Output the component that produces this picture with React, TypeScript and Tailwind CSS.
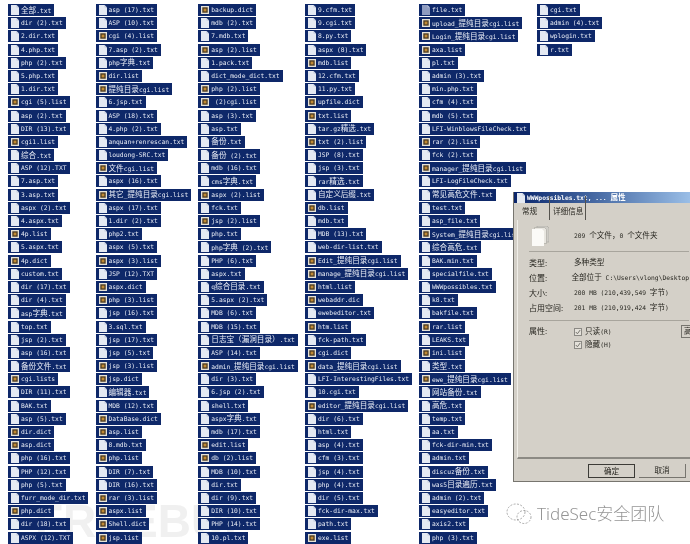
const columns: { width: string; files: string[] }[] = [
  {
    width: "w-[87.5px]",
    files: [
      "全部.txt", "dir (2).txt", "2.dir.txt", "4.php.txt", "php (2).txt", "5.php.txt", "1.dir.txt", "cgi (5).list",
      "asp (2).txt", "DIR (13).txt", "cgi1.list", "综合.txt", "ASP (12).TXT", "7.asp.txt", "3.asp.txt", "aspx (2).txt",
      "4.aspx.txt", "4p.list", "5.aspx.txt", "4p.dict", "custom.txt", "dir (17).txt", "dir (4).txt", "asp字典.txt",
      "top.txt", "jsp (2).txt", "asp (16).txt", "备份文件.txt", "cgi.lists", "DIR (11).txt", "BAK.txt", "asp (5).txt",
      "dir.dict", "asp.dict", "php (16).txt", "PHP (12).txt", "php (5).txt", "furr_mode_dir.txt", "php.dict",
      "dir (18).txt", "ASPX (12).TXT",
    ],
  },
  {
    width: "w-[102.8px]",
    files: [
      "asp (17).txt", "ASP (10).txt", "cgi (4).list", "7.asp (2).txt", "php字典.txt", "dir.list", "提纯目录cgi.list",
      "6.jsp.txt", "ASP (18).txt", "4.php (2).txt", "anquan+renrescan.txt", "loudong-SRC.txt", "文件cgi.list",
      "aspx (16).txt", "其它_提纯目录cgi.list", "aspx (17).txt", "1.dir (2).txt", "php2.txt", "aspx (5).txt",
      "aspx (3).list", "JSP (12).TXT", "aspx.dict", "php (3).list", "jsp (16).txt", "3.sql.txt", "jsp (17).txt",
      "jsp (5).txt", "jsp (3).list", "jsp.dict", "编辑器.txt", "MDB (12).txt", "DataBase.dict", "asp.list", "8.mdb.txt",
      "php.list", "DIR (7).txt", "DIR (16).txt", "rar (3).list", "aspx.list", "Shell.dict", "jsp.list",
    ],
  },
  {
    width: "w-[106.7px]",
    files: [
      "backup.dict", "mdb (2).txt", "7.mdb.txt", "asp (2).list", "1.pack.txt", "dict_mode_dict.txt", "php (2).list",
      " (2)cgi.list", "asp (3).txt", "asp.txt", "备份.txt", "备份 (2).txt", "mdb (16).txt", "cms字典.txt", "aspx (2).list",
      "fck.txt", "jsp (2).list", "php.txt", "php字典 (2).txt", "PHP (6).txt", "aspx.txt", "q综合目录.txt", "5.aspx (2).txt",
      "MDB (6).txt", "MDB (15).txt", "日志宝（漏洞目录）.txt", "ASP (14).txt", "admin_提纯目录cgi.list", "dir (3).txt",
      "6.jsp (2).txt", "shell.txt", "aspx字典.txt", "mdb (17).txt", "edit.list", "db (2).list", "MDB (10).txt", "dir.txt",
      "dir (9).txt", "DIR (10).txt", "PHP (14).txt", "10.pl.txt",
    ],
  },
  {
    width: "w-[114px]",
    files: [
      "9.cfm.txt", "9.cgi.txt", "8.py.txt", "aspx (8).txt", "mdb.list", "12.cfm.txt", "11.py.txt", "upfile.dict",
      "txt.list", "tar.gz精选.txt", "txt (2).list", "JSP (8).txt", "jsp (3).txt", "rar精选.txt", "自定义后缀.txt", "db.list",
      "mdb.txt", "MDB (13).txt", "web-dir-list.txt", "Edit_提纯目录cgi.list", "manage_提纯目录cgi.list", "html.list",
      "webaddr.dic", "ewebeditor.txt", "htm.list", "fck-path.txt", "cgi.dict", "data_提纯目录cgi.list",
      "LFI-InterestingFiles.txt", "10.cgi.txt", "editor_提纯目录cgi.list", "dir (6).txt", "html.txt", "asp (4).txt",
      "cfm (3).txt", "jsp (4).txt", "php (4).txt", "dir (5).txt", "fck-dir-max.txt", "path.txt", "exe.list",
    ],
  },
  {
    width: "w-[118px]",
    files: [
      "file.txt", "upload_提纯目录cgi.list", "Login_提纯目录cgi.list", "axa.list", "pl.txt", "admin (3).txt", "min.php.txt",
      "cfm (4).txt", "mdb (5).txt", "LFI-WinblowsFileCheck.txt", "rar (2).list", "fck (2).txt", "manager_提纯目录cgi.list",
      "LFI-LogFileCheck.txt", "常见高危文件.txt", "test.txt", "asp_file.txt", "System_提纯目录cgi.list", "综合高危.txt",
      "BAK.min.txt", "specialfile.txt", "WWWpossibles.txt", "k8.txt", "bakfile.txt", "rar.list", "LEAKS.txt", "ini.list",
      "类型.txt", "ewe_提纯目录cgi.list", "网站备份.txt", "高危.txt", "temp.txt", "aa.txt", "fck-dir-min.txt", "admin.txt",
      "discuz备份.txt", "was5目录遍历.txt", "admin (2).txt", "easyeditor.txt", "axis2.txt", "php (3).txt",
    ],
  },
  {
    width: "w-[100px]",
    files: ["cgi.txt", "admin (4).txt", "wplogin.txt", "r.txt"],
  },
];

// latin is half the width of the CJK glyphs, like the old bitmap font
function MixedText({ text }: { text: string }) {
  const parts = text.split(/([^\x00-\x7f]+)/).filter(Boolean);
  return (
    <span className="whitespace-pre font-['DejaVu_Sans_Mono',monospace] text-[6.3px] leading-[12px]">
      {parts.map((part, i) =>
        /[^\x00-\x7f]/.test(part) ? (
          <span key={i} className="font-['Noto_Sans_CJK_SC',sans-serif] text-[7.6px]">
            {part}
          </span>
        ) : (
          <span key={i}>{part}</span>
        )
      )}
    </span>
  );
}

function FileIcon({ dim }: { dim?: boolean }) {
  return (
    <svg width="8" height="10" viewBox="0 0 8 10" className="shrink-0">
      <path d="M0 0h5.5L8 2.5V10H0z" fill={dim ? "#8f9cc0" : "#e4e9f2"} />
      <path d="M5.5 0L8 2.5H5.5z" fill={dim ? "#b5bfd8" : "#c3cbdc"} />
    </svg>
  );
}

function ListIcon() {
  return (
    <svg width="8" height="8" viewBox="0 0 8 8" className="shrink-0">
      <rect width="8" height="8" fill="#e6e2d6" />
      <rect x="1.3" y="1.3" width="5.4" height="5.4" fill="#4a3a20" />
      <rect x="2.6" y="2.6" width="2.8" height="2.8" fill="#c08a35" />
    </svg>
  );
}

function FileRow({ name }: { name: string }) {
  const isList = /\.(list|lists|dict|dic)$/.test(name);
  return (
    <div className="flex h-[12px] w-fit items-center gap-[2px] bg-[#0e2869] pl-[3px] pr-[3px] text-[#e9edf6]">
      {isList ? <ListIcon /> : <FileIcon dim={name === "file.txt"} />}
      <MixedText text={name} />
    </div>
  );
}

function PropRow({ label, value }: { label: string; value: string }) {
  return (
    <div className="flex h-[15px] items-center">
      <div className="w-[45px] font-['Noto_Sans_CJK_SC',sans-serif] text-[8px]">{label}</div>
      <MixedText text={value} />
    </div>
  );
}

function Checked({ label }: { label: string }) {
  return (
    <div className="flex h-[13px] items-center gap-[3px]">
      <svg width="8" height="8" viewBox="0 0 8 8" className="shrink-0">
        <rect x="0.5" y="0.5" width="7" height="7" fill="#e4e1da" stroke="#8b8984" />
        <path d="M1.8 4l1.6 1.8L6.2 2" fill="none" stroke="#77756f" strokeWidth="1" />
      </svg>
      <MixedText text={label} />
    </div>
  );
}

function PropertiesWindow() {
  return (
    <div className="absolute left-[513px] top-[192px] z-20 h-[290px] w-[190px] border-b border-l border-[#77756f] bg-[#d4d0c8] text-[#26251f]">
      <div className="flex h-[11px] items-center gap-[2px] bg-gradient-to-r from-[#0a246a] to-[#a6caf0] pl-[3px] font-bold text-white">
        <FileIcon />
        <MixedText text="WWWpossibles.txt, ... 属性" />
      </div>
      <div className="mx-[3px] mt-[5px] flex h-[12px] items-end pl-[3px]">
        <div className="w-[30px] border-r border-[#55534e] pl-[2px]">
          <MixedText text="常规" />
        </div>
        <div className="border-r border-[#55534e] pl-[3px] pr-[2px]">
          <MixedText text="详细信息" />
        </div>
      </div>
      <div className="mx-[3px] h-[239px] border-b-2 border-l border-b-[#8c8a84] border-l-[#f0eee8] px-[11px]">
        <div className="flex h-[32px] items-center border-b border-[#a8a59d]">
          <div className="flex w-[45px] pl-[3px]">
            <svg width="17" height="20" viewBox="0 0 17 20">
              <path d="M5 0h10l2 2v14H5z" fill="#cfcdc7" stroke="#9b9993" strokeWidth="0.5" />
              <path d="M2.5 1.5h10l2 2v14h-12z" fill="#e8e6e0" stroke="#9b9993" strokeWidth="0.5" />
              <path d="M0 3h10l2 2v15H0z" fill="#fbfaf7" />
            </svg>
          </div>
          <MixedText text="209 个文件，0 个文件夹" />
        </div>
        <div className="flex flex-col border-b border-[#a8a59d] pb-[5px] pt-[3px]">
          <PropRow label="类型:" value="多种类型" />
          <PropRow label="位置:" value="全部位于 C:\Users\vlong\Desktop" />
          <PropRow label="大小:" value="200 MB (210,439,549 字节)" />
          <PropRow label="占用空间:" value="201 MB (210,919,424 字节)" />
        </div>
        <div className="flex pt-[4px]">
          <div className="w-[45px] shrink-0 font-['Noto_Sans_CJK_SC',sans-serif] text-[8px]">属性:</div>
          <div className="flex w-[107px] shrink-0 flex-col">
            <Checked label="只读(R)" />
            <Checked label="隐藏(H)" />
          </div>
          <div className="flex h-[13px] w-[30px] shrink-0 items-center border border-[#77756f] bg-[#d4d0c8] pl-[2px]">
            <MixedText text="高级" />
          </div>
        </div>
      </div>
      <div className="mt-[5px] flex gap-[4px] pl-[74px]">
        <div className="flex h-[14px] w-[47px] items-center justify-center border border-[#3c3b37]">
          <MixedText text="确定" />
        </div>
        <div className="flex h-[14px] w-[47px] items-center justify-center border-b border-r border-[#77756f]">
          <MixedText text="取消" />
        </div>
      </div>
    </div>
  );
}

export default function App() {
  return (
    <div className="relative h-[544px] w-[690px] overflow-hidden bg-white blur-[0.3px]">
      {/* faint site watermark behind the listing */}
      <div className="absolute left-[35px] top-[493px] font-['Liberation_Sans',sans-serif] text-[46px] font-bold leading-[56px] text-[#f0f0f0]">
        FREEBUF
      </div>

      <div className="relative z-10 flex pl-[8px] pt-[4px]">
        {columns.map((col) => (
          <div key={col.width} className={`${col.width} flex flex-col gap-[1.2px]`}>
            {col.files.map((name) => (
              <FileRow key={name} name={name} />
            ))}
          </div>
        ))}
      </div>

      <PropertiesWindow />

      <div className="absolute left-[506px] top-[503px] z-20 flex items-center gap-[5px]">
        <svg width="26" height="22" viewBox="0 0 26 22" fill="none" stroke="#8a8a8a" strokeWidth="0.7" strokeDasharray="2 1.4">
          <ellipse cx="10" cy="9" rx="9" ry="8" />
          <ellipse cx="18" cy="14" rx="7" ry="6.5" />
        </svg>
        <span className="font-['Noto_Sans','Noto_Sans_CJK_SC',sans-serif] text-[17px] font-light leading-[20px] text-[#959595]">
          TideSec安全团队
        </span>
      </div>
    </div>
  );
}
